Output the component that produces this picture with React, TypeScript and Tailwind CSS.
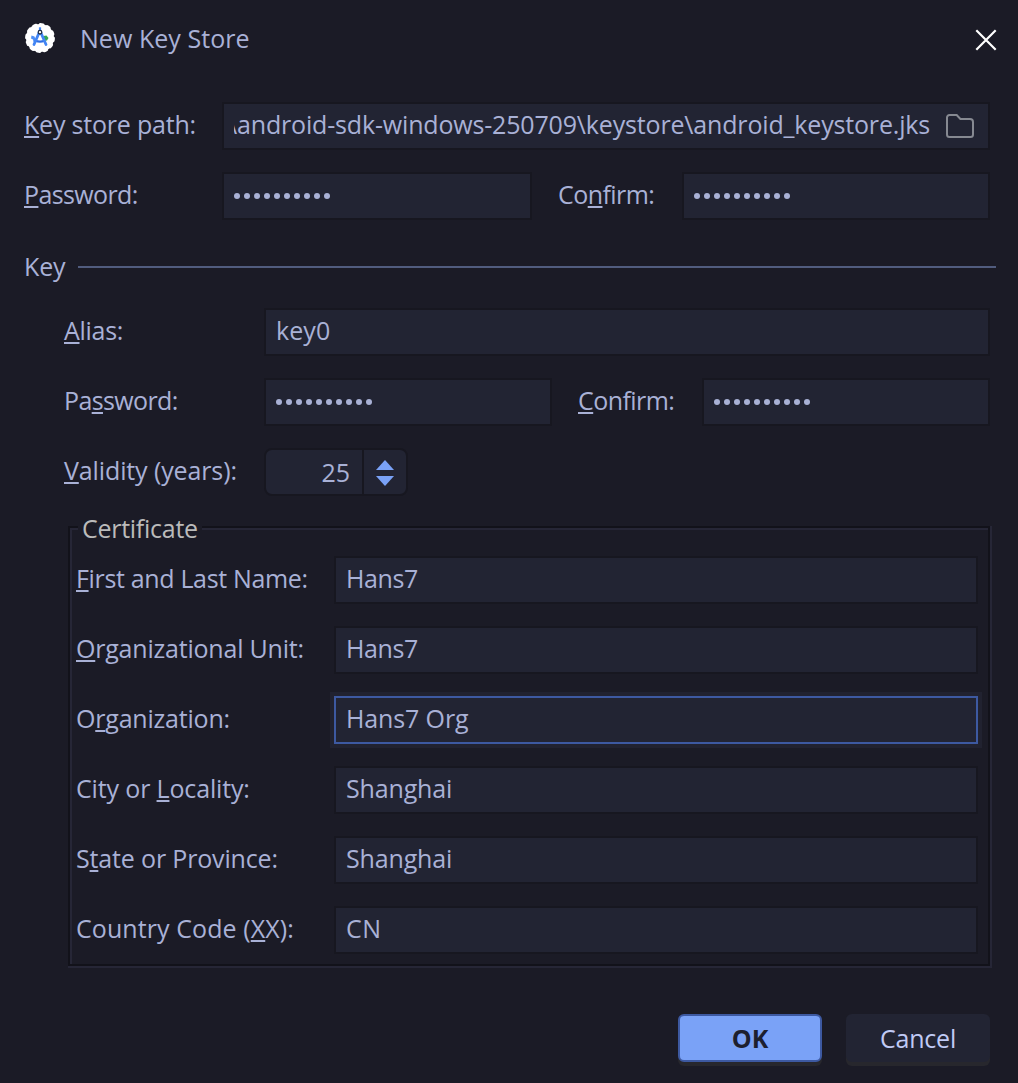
import type { ReactNode } from "react";

function Label({ children, className = "" }: { children: ReactNode; className?: string }) {
  return (
    <label className={`flex h-12 shrink-0 items-center whitespace-pre pb-[5px] ${className}`}>
      <span>{children}</span>
    </label>
  );
}

function M({ children }: { children: ReactNode }) {
  return (
    <span className="underline decoration-2 underline-offset-2 [text-decoration-skip-ink:none]">
      {children}
    </span>
  );
}

function Field({ children, className = "", focused = false }: { children: ReactNode; className?: string; focused?: boolean }) {
  const state = focused
    ? "border-[#3d59a1] shadow-[0_0_0_4px_#212230]"
    : "border-[#171720]";
  return (
    <div className={`flex h-12 items-center border-2 bg-[#222433] px-2.5 whitespace-pre ${state} ${className}`}>
      {children}
    </div>
  );
}

function Value({ children, className = "" }: { children: ReactNode; className?: string }) {
  return <span className={`pb-[5px] ${className}`}>{children}</span>;
}

function Dots() {
  return (
    <div className="flex gap-1">
      {Array.from({ length: 10 }, (_, i) => (
        <span key={i} className="size-1.5 rounded-full bg-[#a9b1d6]" />
      ))}
    </div>
  );
}

function StudioIcon() {
  return (
    <svg width="30" height="30" viewBox="0 0 30 30" className="mb-0.5 shrink-0">
      <circle cx="15" cy="15" r="14" fill="#fff" />
      <circle cx="15" cy="15" r="13.4" fill="none" stroke="#fff" strokeWidth="3" strokeLinecap="round" strokeDasharray="2.6 4.416" />
      <path d="M6.500 12.500l3 1 1.500 4.500-2.500 1-.5-2.500-2-1z" fill="#4e8ff5" />
      <path d="M18.500 13l3-.5 2 2.500-1.500 2.500-3 .5z" fill="#34a853" />
      <path d="M10.500 17.800Q15 19.500 19.500 17.800" fill="none" stroke="#2f6fe4" strokeWidth="2.200" />
      <path d="M14.200 9.500L9 21.500M15.800 9.500L21 21.500" fill="none" stroke="#4285f4" strokeWidth="2.800" strokeLinecap="round" />
      <path d="M15 4.300v3" stroke="#4285f4" strokeWidth="2.200" />
      <circle cx="15" cy="9.200" r="1.800" fill="#fff" stroke="#20304a" strokeWidth="1.300" />
    </svg>
  );
}

const certificate = [
  { id: "name", label: <><M>F</M>irst and Last Name:</>, track: "tracking-[-0.34px]", value: "Hans7", vt: "tracking-[-0.39px]" },
  { id: "unit", label: <><M>O</M>rganizational Unit:</>, track: "tracking-[-0.21px]", value: "Hans7", vt: "tracking-[-0.39px]" },
  { id: "org", label: <>O<M>r</M>ganization:</>, track: "tracking-[-0.2px]", value: "Hans7 Org", vt: "tracking-[-0.13px]", focused: true },
  { id: "city", label: <>City or <M>L</M>ocality:</>, track: "tracking-[-0.15px]", value: "Shanghai", vt: "tracking-[-0.15px]" },
  { id: "state", label: <>S<M>t</M>ate or Province:</>, track: "tracking-[-0.16px]", value: "Shanghai", vt: "tracking-[-0.15px]" },
  { id: "country", label: <>Country Code (<M>X</M>X):</>, track: "tracking-[0.08px]", value: "CN", vt: "tracking-[0.6px]" },
];

export default function App() {
  return (
    <div className="flex h-[1083px] w-[1018px] flex-col overflow-hidden bg-[#1b1b26] font-['Open_Sans',sans-serif] text-[25px] leading-8 text-[#a9b1d6]">
      <header className="flex h-[78px] shrink-0 items-center justify-between pr-[21px] pl-[25px]">
        <div className="flex items-center">
          <StudioIcon />
          <h1 className="ml-[25px] pb-[3px] tracking-[0.05px]">New Key Store</h1>
        </div>
        <svg width="22" height="22" viewBox="0 0 22 22" className="mt-[2px]">
          <path d="M1.300 1.300l19.400 19.400M20.700 1.300L1.300 20.700" stroke="#fff" strokeWidth="2.200" />
        </svg>
      </header>

      <div className="mt-6 flex pr-7 pl-6">
        <Label className="w-[198px] tracking-[-0.2px]"><M>K</M>ey store path:</Label>
        <Field className="min-w-0 flex-1">
          <div className="flex w-[696px] justify-end overflow-hidden">
            <Value className="tracking-[-0.17px]">{"\\android-sdk-windows-250709\\keystore\\android_keystore.jks"}</Value>
          </div>
          <svg width="28" height="24" viewBox="0 0 28 24" className="ml-4 shrink-0">
            <path d="M3.500 1h7.200l3.700 4H24a3 3 0 0 1 3 3v12.500a2.500 2.500 0 0 1-2.500 2.500h-21A2.500 2.500 0 0 1 1 20.500v-17A2.500 2.500 0 0 1 3.500 1z" fill="none" stroke="#868991" strokeWidth="2" />
          </svg>
        </Field>
      </div>

      <div className="mt-[22px] flex pr-7 pl-6">
        <Label className="w-[198px] tracking-[-0.63px]"><M>P</M>assword:</Label>
        <Field className="w-[310px]"><Dots /></Field>
        <Label className="w-[150px] pl-[26px] tracking-[-0.55px]">Co<M>n</M>firm:</Label>
        <Field className="flex-1"><Dots /></Field>
      </div>

      <div className="mt-[23px] flex h-12 items-center pr-[22px] pl-6">
        <span className="w-[54px] pb-0.5 tracking-[-0.17px]">Key</span>
        <div className="mb-px h-0.5 flex-1 bg-[#515c7e]" />
      </div>

      <div className="mt-[17px] flex flex-col gap-[22px] pr-7 pl-16">
        <div className="flex">
          <Label className="w-[200px] tracking-[-0.3px]"><M>A</M>lias:</Label>
          <Field className="flex-1"><Value className="tracking-[0.1px]">key0</Value></Field>
        </div>
        <div className="flex">
          <Label className="w-[200px] tracking-[-0.63px]">Pa<M>s</M>sword:</Label>
          <Field className="w-[288px]"><Dots /></Field>
          <Label className="w-[150px] pl-[26px] tracking-[-0.55px]"><M>C</M>onfirm:</Label>
          <Field className="flex-1"><Dots /></Field>
        </div>
        <div className="flex">
          <Label className="w-[200px] tracking-[-0.12px]"><M>V</M>alidity (years):</Label>
          <div className="flex h-12 w-36 rounded-lg border-2 border-[#171720] bg-[#222433]">
            <div className="flex w-[98px] items-center justify-end border-r-2 border-[#171720] pr-3">
              <span>25</span>
            </div>
            <div className="flex flex-1 flex-col items-center justify-center gap-1.5 pt-0.5">
              <svg width="18" height="10" viewBox="0 0 18 10"><path d="M9 0l9 10H0z" fill="#7aa2f7" /></svg>
              <svg width="18" height="10" viewBox="0 0 18 10"><path d="M9 10l9-10H0z" fill="#7aa2f7" /></svg>
            </div>
          </div>
        </div>
      </div>

      <section className="relative mt-[30px] ml-[68px] h-[442px] w-[924px] border-r-2 border-b-2 border-[#262636]">
        <div className="h-[440px] w-[922px] border-2 border-[#12121a]">
          <div className="h-[436px] w-[918px] border-t-2 border-l-2 border-[#262636] pt-[26px] pr-2.5 pl-1">
            <div className="flex flex-col gap-[22px]">
              {certificate.map((c) => (
                <div key={c.id} className="flex">
                  <Label className={`w-[258px] ${c.track}`}>{c.label}</Label>
                  <Field className="flex-1" focused={c.focused}><Value className={c.vt}>{c.value}</Value></Field>
                </div>
              ))}
            </div>
          </div>
        </div>
        <span className="absolute -top-3.5 left-2.5 h-8 w-[124px] bg-[#1b1b26] pl-1 tracking-[-0.27px] text-[#bbb]">Certificate</span>
      </section>

      <footer className="mt-[46px] flex justify-end gap-6 pr-7">
        <button className="h-12 w-36 rounded-md border-2 border-[#3d59a1] bg-[#7aa2f7] font-bold text-[#1d202f] shadow-[0_4px_0_#27272d]">OK</button>
        <button className="h-12 w-36 rounded-md bg-[#222433] tracking-[-0.2px] text-[#c0caf5] shadow-[0_4px_0_#27272d]">Cancel</button>
      </footer>
    </div>
  );
}
